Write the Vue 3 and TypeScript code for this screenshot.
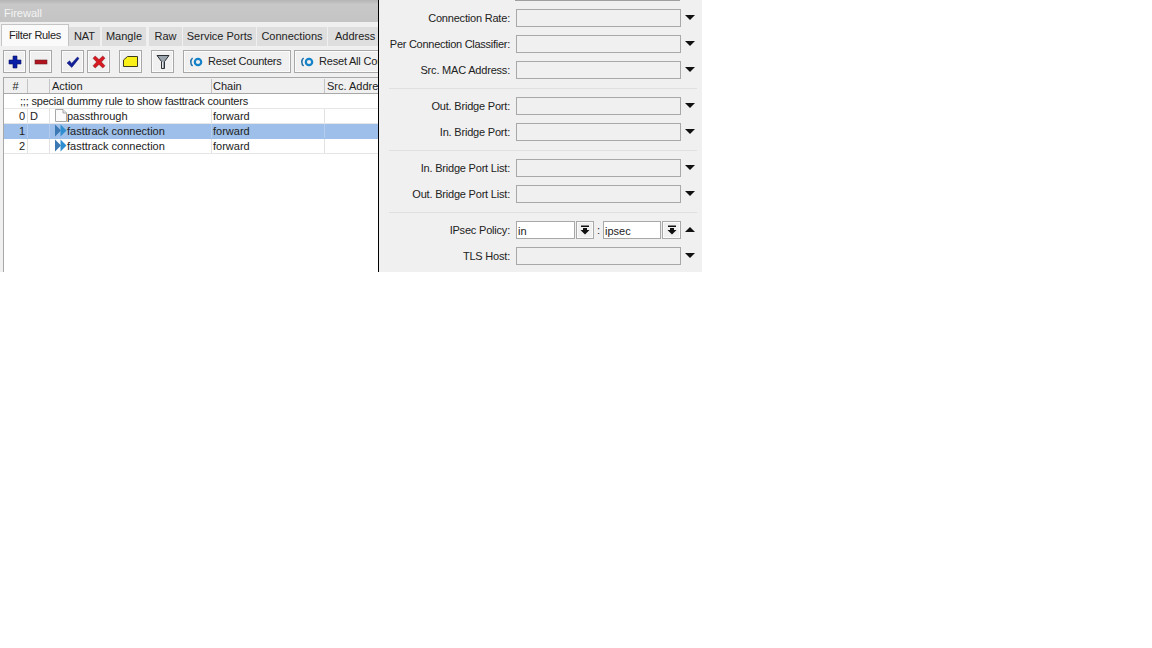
<script setup lang="ts">
const tabs = [
  { label: 'NAT', width: 31, gap: 2 },
  { label: 'Mangle', width: 44, gap: 3 },
  { label: 'Raw', width: 33, gap: 1 },
  { label: 'Service Ports', width: 73, gap: 1 },
  { label: 'Connections', width: 70, gap: 1 },
  { label: 'Address Lists', width: 80, gap: 0 },
]
const rows = [
  { n: '0', f: 'D', icon: 'page', action: 'passthrough', sel: false },
  { n: '1', f: '', icon: 'ff', action: 'fasttrack connection', sel: true },
  { n: '2', f: '', icon: 'ff', action: 'fasttrack connection', sel: false },
]
const groups = [
  ['Connection Rate:', 'Per Connection Classifier:', 'Src. MAC Address:'],
  ['Out. Bridge Port:', 'In. Bridge Port:'],
  ['In. Bridge Port List:', 'Out. Bridge Port List:'],
]
</script>

<template>
  <div class="scene">
    <section class="win">
      <header class="title">Firewall</header>
      <nav class="tabs">
        <span class="tab active">Filter Rules</span>
        <span
          v-for="t in tabs"
          :key="t.label"
          class="tab"
          :style="{ width: t.width + 'px', marginRight: t.gap + 'px' }"
        >{{ t.label }}</span>
      </nav>
      <div class="toolbar">
        <button class="btn ic g0"><svg width="14" height="14" viewBox="0 0 14 14"><path d="M5 1h4v4h4v4H9v4H5V9H1V5h4z" fill="#0a1fa8" stroke="#0a1560" stroke-width=".6"/></svg></button>
        <button class="btn ic g1"><svg width="14" height="14" viewBox="0 0 14 14"><rect x="1" y="5" width="12" height="4" fill="#b2121c" stroke="#6c2228" stroke-width=".6"/></svg></button>
        <button class="btn ic g1a"><svg width="14" height="14" viewBox="0 0 14 14"><path d="M1 8l2.600-2.200L5.600 8.400 11.500 2 13 3.400 5.800 12.400z" fill="#12209c" stroke="#0c1668" stroke-width=".5"/></svg></button>
        <button class="btn ic g1"><svg width="14" height="14" viewBox="0 0 14 14"><path d="M1 3.200L3.200 1 7 4.600 10.800 1 13 3.200 9.400 7 13 10.800 10.800 13 7 9.400 3.200 13 1 10.800 4.600 7z" fill="#d81820" stroke="#7a1a1e" stroke-width=".5"/></svg></button>
        <button class="btn ic g2"><svg width="15" height="13" viewBox="0 0 15 13"><path d="M.5 5L4.500 1.500H14.500V11.500H.5z" fill="#f8f018" stroke="#3c3c1c" stroke-linejoin="miter"/></svg></button>
        <button class="btn ic g2"><svg width="14" height="16" viewBox="0 0 14 16"><path d="M1 1.500h12L8.500 7.500v7h-3v-7z" fill="#9aa4ac" stroke="#2c3034"/><path d="M6.500 8v6" stroke="#e8e8e8"/></svg></button>
        <button class="btn text g2">
          <svg class="reset" width="14" height="10" viewBox="0 0 14 10"><path d="M3.600 1C1.200 3 1.200 7 3.600 9" fill="none" stroke="#1b6ea8" stroke-width="1.500"/><circle cx="9" cy="5" r="3.200" fill="none" stroke="#1482c8" stroke-width="2.200"/></svg>
          Reset Counters
        </button>
        <button class="btn text g3">
          <svg class="reset" width="14" height="10" viewBox="0 0 14 10"><path d="M3.600 1C1.200 3 1.200 7 3.600 9" fill="none" stroke="#1b6ea8" stroke-width="1.500"/><circle cx="9" cy="5" r="3.200" fill="none" stroke="#1482c8" stroke-width="2.200"/></svg>
          Reset All Counters
        </button>
      </div>
      <div class="table">
        <div class="row head">
          <span class="c num">#</span><span class="c flag"></span><span class="c action">Action</span><span class="c chain">Chain</span><span class="c src">Src. Address</span>
        </div>
        <div class="row comment">;;; special dummy rule to show fasttrack counters</div>
        <div v-for="r in rows" :key="r.n" class="row" :class="{ sel: r.sel }">
          <span class="c num right">{{ r.n }}</span>
          <span class="c flag">{{ r.f }}</span>
          <span class="c action">
            <svg v-if="r.icon === 'page'" class="ri" width="13" height="13" viewBox="0 0 13 13"><path d="M1.500.5H9L12.500 4v8.500H1.500z" fill="#fbfbfb" stroke="#a8a8a8"/><path d="M9 .5V4h3.500" fill="#e4e4e4" stroke="#a8a8a8"/></svg>
            <svg v-else class="ri" width="13" height="13" viewBox="0 0 13 13"><path d="M1 .5L7 6.500 1 12.500z" fill="#3c78b4"/><path d="M6.500 .5L12.500 6.500 6.500 12.500z" fill="#2f8ed0"/></svg>
            <span>{{ r.action }}</span>
          </span>
          <span class="c chain">forward</span>
          <span class="c src"></span>
        </div>
      </div>
    </section>

    <aside class="panel">
      <div class="stub"></div>
      <template v-for="(g, i) in groups" :key="i">
        <div class="group">
          <div v-for="l in g" :key="l" class="field">
            <label :class="{ tight: l.startsWith('Per') }">{{ l }}</label>
            <span class="input"></span>
            <i class="arrow down"></i>
          </div>
        </div>
      </template>
      <div class="group last">
        <div class="field">
          <label>IPsec Policy:</label>
          <span class="mini m1">in</span>
          <span class="drop d1"><svg width="10" height="10" viewBox="0 0 10 10"><path d="M1 .5h8v1.500H1zM3 3h4v2h2.500L5 9.500.5 5H3z" fill="#111"/></svg></span>
          <span class="colon">:</span>
          <span class="mini m2">ipsec</span>
          <span class="drop d2"><svg width="10" height="10" viewBox="0 0 10 10"><path d="M1 .5h8v1.500H1zM3 3h4v2h2.500L5 9.500.5 5H3z" fill="#111"/></svg></span>
          <i class="arrow up"></i>
        </div>
        <div class="field">
          <label>TLS Host:</label>
          <span class="input"></span>
          <i class="arrow down"></i>
        </div>
      </div>
    </aside>
  </div>
</template>

<style>
html, body { background: #fff; }
</style>

<style scoped>
.scene {
  display: flex;
  width: 702px;
  height: 272px;
  overflow: hidden;
  font: 11px/15px "Liberation Sans", Arial, sans-serif;
  color: #222;
}
.win {
  width: 378px;
  flex: none;
  display: flex;
  flex-direction: column;
  background: #f0f0f0;
  overflow: hidden;
}
.title {
  height: 22px;
  flex: none;
  background: linear-gradient(#b4b4b4, #c8c8c8 20%, #c4c4c4);
  color: #f4f4f4;
  padding: 6px 0 0 4px;
  box-sizing: border-box;
}
.tabs {
  height: 24px;
  flex: none;
  display: flex;
  align-items: flex-end;
  white-space: nowrap;
  padding-left: 1px;
  box-sizing: border-box;
}
.tab {
  height: 19px;
  padding-top: 2px;
  box-sizing: border-box;
  background: #dedede;
  flex: none;
  text-align: center;
  overflow: hidden;
}
.tab.active {
  width: 68px;
  height: 22px;
  padding-top: 3px;
  background: #fafafa;
  border: 1px solid #c4c4c4;
  border-bottom: none;
  letter-spacing: -.3px;
}
.toolbar {
  height: 31px;
  flex: none;
  display: flex;
  align-items: flex-start;
  padding: 4px 0 0 3px;
  box-sizing: border-box;
}
.btn {
  height: 23px;
  padding: 0;
  border: 1px solid #a8a8a8;
  outline: 1px solid #fbfbfb;
  outline-offset: -2px;
  background: #f0f0f0;
  color: #222;
  font: inherit;
  display: flex;
  align-items: center;
  justify-content: center;
  flex: none;
  box-sizing: border-box;
}
.ic { width: 23px; }
.g1 { margin-left: 3px; }
.g1a { margin-left: 9px; }
.g2 { margin-left: 9px; }
.text {
  width: 108px;
  white-space: nowrap;
  justify-content: flex-start;
  padding-left: 5px;
  letter-spacing: -.2px;
}
.g3 { margin-left: 3px; width: 130px; }
.reset { margin-right: 5px; }
.table {
  flex: 1;
  margin-left: 3px;
  background: #fff;
  border-left: 1px solid #a8a8a8;
  border-top: 1px solid #a8a8a8;
}
.row {
  display: flex;
  height: 15px;
  line-height: 14px;
  white-space: nowrap;
  border-bottom: 1px solid #e6e6e6;
  box-sizing: border-box;
}
.head {
  height: 16px;
  line-height: 15px;
  padding-top: 1px;
  background: #f0f0f0;
  border-bottom: 1px solid #a8a8a8;
}
.comment { padding-left: 16px; letter-spacing: -.2px; }
.sel { background: #9dbfe9; border-bottom-color: #9dbfe9; }
.c {
  flex: none;
  box-sizing: border-box;
  border-right: 1px solid #e2e2e2;
  padding-left: 2px;
  display: flex;
  align-items: center;
  overflow: hidden;
}
.sel .c { border-right-color: #b4cdee; }
.head .c { border-right-color: #c4c4c4; }
.num { width: 24px; justify-content: center; padding-left: 0; }
.right { justify-content: flex-end; padding-right: 2px; }
.flag { width: 22px; }
.action { width: 162px; padding-left: 2px; }
.chain { width: 113px; padding-left: 1px; }
.src { width: 60px; border-right: none; }
.ri { margin: -1px 0 0 2px; flex: none; }
.panel {
  width: 324px;
  flex: none;
  box-sizing: border-box;
  border-left: 1px solid #000;
  background: #f0f0f0;
  padding: 0 5px 0 10px;
  overflow: hidden;
}
.stub {
  height: 1px;
  width: 165px;
  margin-left: 126px;
  background: #a0a0a0;
}
.group {
  padding: 4px 0 5px;
  border-bottom: 1px solid #e0e0e0;
}
.group.last { border-bottom: none; }
.field {
  display: flex;
  align-items: center;
  height: 26px;
}
label {
  width: 121px;
  flex: none;
  text-align: right;
  white-space: nowrap;
  margin-right: 6px;
  padding-top: 1px;
  letter-spacing: -.2px;
}
label.tight { letter-spacing: -.27px; }
.input {
  width: 165px;
  height: 18px;
  box-sizing: border-box;
  border: 1px solid #a8a8a8;
  background: #f0f0f0;
  flex: none;
}
.arrow {
  width: 0;
  height: 0;
  margin-left: 4px;
  border-left: 5px solid transparent;
  border-right: 5px solid transparent;
}
.arrow.down { border-top: 5px solid #111; margin-top: -2px; }
.arrow.up { border-bottom: 5px solid #111; margin-top: -2px; }
.mini {
  height: 18px;
  box-sizing: border-box;
  border: 1px solid #a8a8a8;
  background: #fff;
  padding-left: 1px;
  line-height: 18px;
  flex: none;
}
.m1 { width: 59px; }
.m2 { width: 58px; }
.drop {
  height: 18px;
  box-sizing: border-box;
  margin-left: 1px;
  border: 1px solid #a8a8a8;
  outline: 1px solid #fbfbfb;
  outline-offset: -2px;
  display: flex;
  align-items: center;
  justify-content: center;
  flex: none;
}
.d1 { width: 18px; }
.d2 { width: 19px; }
.colon { width: 9px; text-align: center; flex: none; }
</style>
